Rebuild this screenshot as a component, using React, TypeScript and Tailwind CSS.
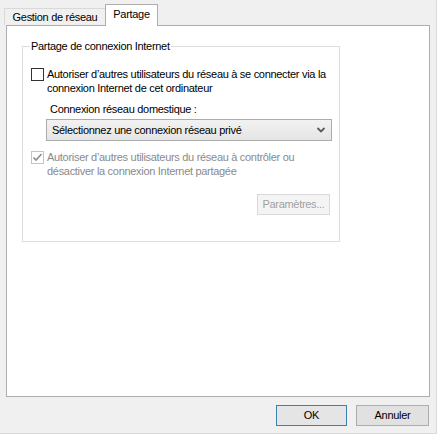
import React from 'react';

const font = { fontFamily: '"Liberation Sans", Arial, sans-serif' };

const Checkbox: React.FC<{ checked?: boolean; disabled?: boolean }> = ({ checked, disabled }) => (
  <div
    className={`w-[13px] h-[13px] shrink-0 border bg-white flex items-center justify-center ${
      disabled ? 'border-[#c4c4c4]' : 'border-[#333333]'
    }`}
  >
    {checked && (
      <svg width="11" height="11" viewBox="0 0 11 11">
        <polyline points="1.5,5.5 4,8 9.5,2" fill="none" stroke={disabled ? '#8d8d8d' : '#333'} strokeWidth="1.6" />
      </svg>
    )}
  </div>
);

export default function App() {
  return (
    <div className="w-[438px] h-[435px] bg-white">
      <div
        className="w-[437px] h-[434px] bg-[#f0f0f0] border-r border-b border-[#dadada] flex flex-col text-[11px] tracking-[-0.3px] text-black whitespace-nowrap"
        style={font}
      >
        {/* tabs */}
        <div className="flex items-end pl-[4px] pt-[4px] h-[25px] relative z-10">
          <div className="h-[17px] w-[101px] border border-b-0 border-r-0 border-[#d9d9d9] bg-[#f0f0f0] flex items-center justify-center leading-none pt-px">
            Gestion de réseau
          </div>
          <div className="w-[53px] border border-b-0 border-[#adadad] bg-white flex items-start justify-center pt-[4px] leading-none -mb-px h-[22px]">
            Partage
          </div>
        </div>

        {/* panel */}
        <div className="mx-[6px] h-[372px] border border-[#adadad] bg-white">
          <fieldset className="ml-[15px] mt-[13px] w-[318px] min-w-0 h-[203px] border border-[#dcdcdc] px-[8px]">
            <legend className="ml-[-1px] px-[1px] leading-[14px]">Partage de connexion Internet</legend>

            <div className="flex gap-[3px] mt-[14px]">
              <div className="pt-px">
                <Checkbox />
              </div>
              <div className="leading-[14px]">
                Autoriser d’autres utilisateurs du réseau à se connecter via la
                <br />
                connexion Internet de cet ordinateur
              </div>
            </div>

            <div className="ml-[19px] mt-[7px] leading-[14px]">Connexion réseau domestique :</div>

            <div className="ml-[15px] mt-[3px] w-[286px] h-[22px] border border-[#acacac] bg-gradient-to-b from-[#f2f2f2] to-[#e5e5e5] flex items-center justify-between pl-[5px] pr-[5px]">
              <span>Sélectionnez une connexion réseau privé</span>
              <svg width="10" height="8" viewBox="0 0 10 8">
                <polyline points="1.5,2 5,5.5 8.5,2" fill="none" stroke="#5b5b5b" strokeWidth="1.8" />
              </svg>
            </div>

            <div className="flex gap-[3px] mt-[9px] text-[#8a8a8a]">
              <div className="pt-px">
                <Checkbox checked disabled />
              </div>
              <div className="leading-[14px]">
                Autoriser d’autres utilisateurs du réseau à contrôler ou
                <br />
                désactiver la connexion Internet partagée
              </div>
            </div>

            <div className="flex justify-end mt-[16px] pr-[1px]">
              <div className="w-[73px] h-[21px] border border-[#d9d9d9] bg-[#f4f4f4] text-[#a0a0a0] flex items-center justify-center">
                Paramètres...
              </div>
            </div>
          </fieldset>
        </div>

        {/* buttons */}
        <div className="flex justify-end gap-[9px] mt-[8px] pr-[7px]">
          <button className="w-[71px] h-[21px] border border-[#3c7fb1] bg-[#e5e5e5] flex items-center justify-center">
            OK
          </button>
          <button className="w-[73px] h-[21px] border border-[#adadad] bg-[#e1e1e1] flex items-center justify-center">
            Annuler
          </button>
        </div>
      </div>
    </div>
  );
}
